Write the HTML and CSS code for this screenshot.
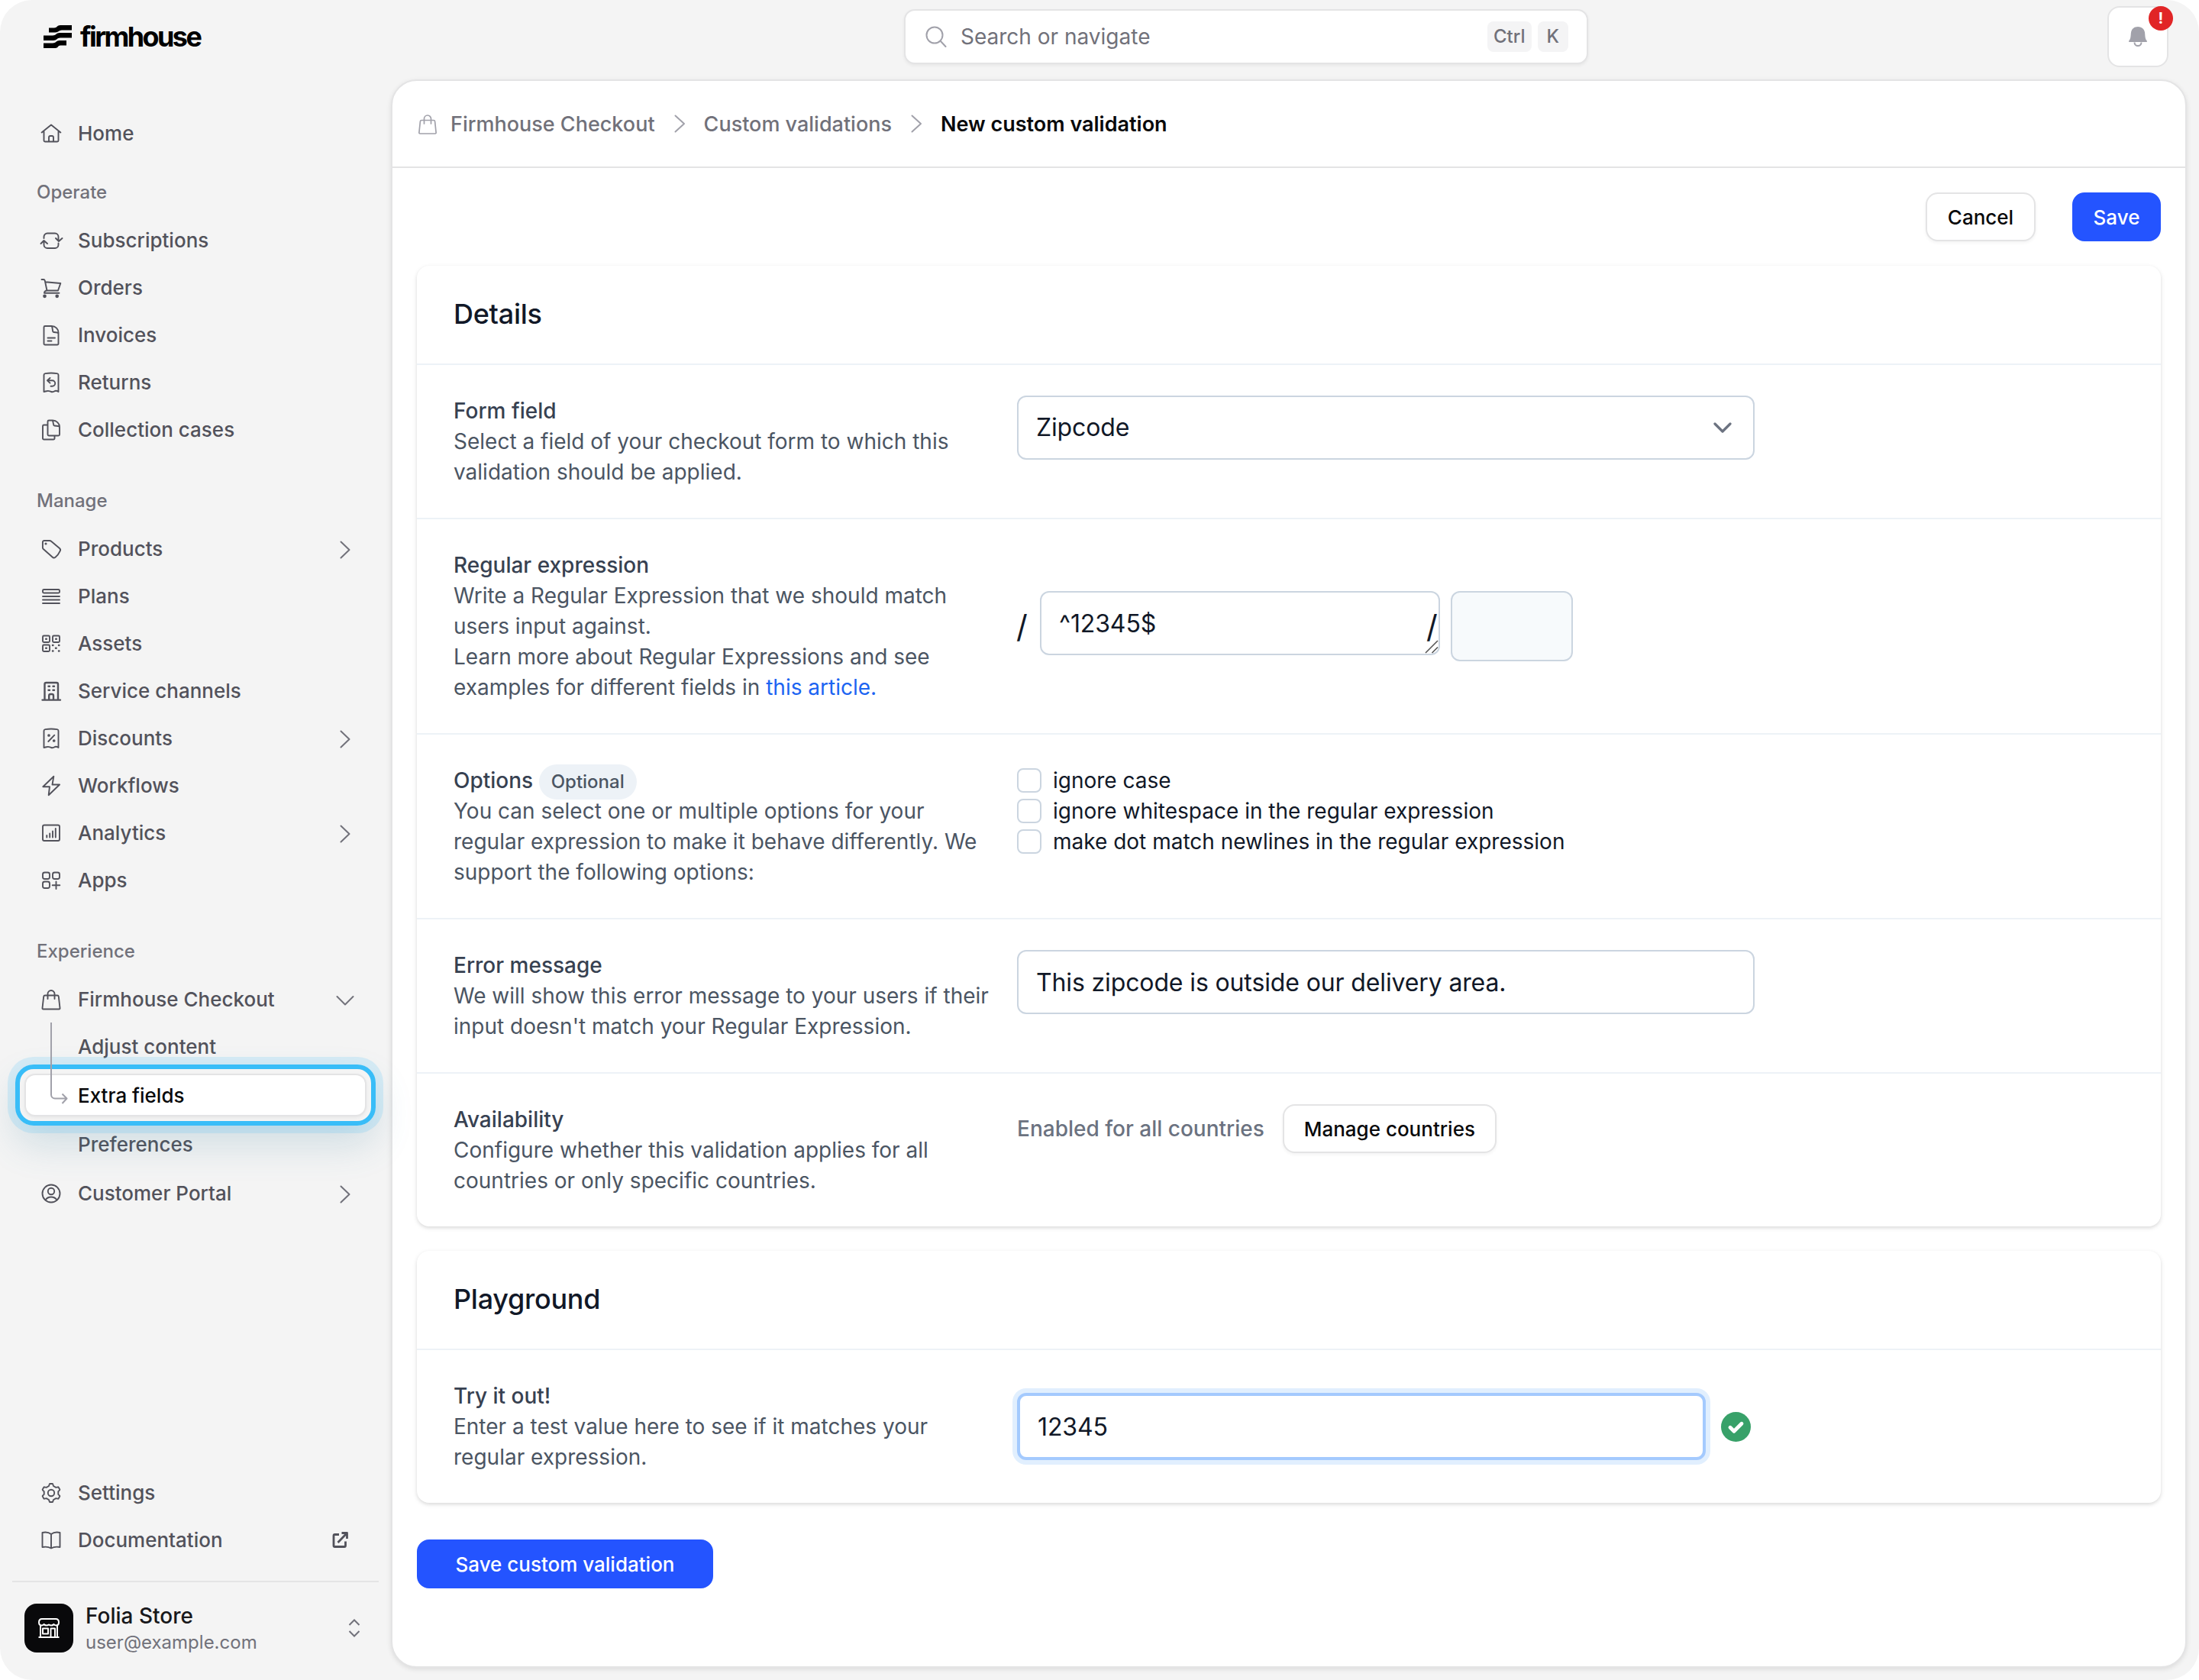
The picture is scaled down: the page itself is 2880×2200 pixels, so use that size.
FILE: index.html
```html
<!DOCTYPE html>
<html lang="en">
<head>
    <meta charset="UTF-8">
    <meta name="viewport" content="width=device-width, initial-scale=1.0">
    <title>New custom validation - Firmhouse</title>
    <link rel="stylesheet" href="styles.css">
</head>
<body>
    <div class="app">
        <header class="topbar">
            <a class="logo">
                <svg width="38" height="32" viewBox="0 0 38 32"><path d="M7 4.500h7c3.500 0 4-3.500 8-3.500h15v6.500H24c-4 0-4.500 3-8.500 3H7zM0 14.500h12c4 0 5-3.500 9-3.500h16v6.500H22c-4 0-5 3.500-9 3.500H0zM0 24.500h12c4 0 5-3.500 9-3.500h9v6.500H22c-3 0-3 3.500-6.500 3.500H0z"/></svg>
                <span>firmhouse</span>
            </a>
            <div class="search">
                <svg class="search-icon" width="28" height="28" viewBox="0 0 28 28"><circle cx="12" cy="12" r="10.500"/><path d="M19.500 19.500l7 7.500"/></svg>
                <span class="search-text">Search or navigate</span>
                <kbd>Ctrl</kbd>
                <kbd>K</kbd>
            </div>
            <button class="bell">
                <svg width="26" height="28" viewBox="0 0 26 28"><path d="M13 1C7.500 1 4 4.500 3.800 10 3.600 15 3 17.500 1.200 19.500c-.5.7-.2 1.500.8 1.500h22c1 0 1.300-.8.8-1.500-1.800-2-2.400-4.500-2.600-9.500C22 4.500 18.500 1 13 1z" fill="#a1a1aa"/><path d="M8.500 21.500a4.500 4.500 0 0 0 9 0" fill="none" stroke="#a1a1aa" stroke-width="2"/></svg>
                <span class="alert">!</span>
            </button>
        </header>

        <nav class="sidebar">
            <a class="item">
                <svg class="icon" viewBox="0 0 32 32"><path d="M3.600 15.500L16 5.500l12.400 10M6.500 14v12A1.500 1.500 0 0 0 8 27.500h16a1.500 1.500 0 0 0 1.500-1.500V14M13 27.500v-5.500a2 2 0 0 1 2-2h2a2 2 0 0 1 2 2v5.500"/></svg>
                <span>Home</span>
            </a>

            <div class="group first">
                <h3>Operate</h3>
                <a class="item">
                    <svg class="icon" viewBox="0 0 32 32"><path d="M6.500 14v-2a4.500 4.500 0 0 1 4.500-4.500h10a4.500 4.500 0 0 1 4.500 4.500v5.500M25.500 20.500v2A4.500 4.500 0 0 1 21 27H11a4.500 4.500 0 0 1-4.500-4.500v-5M22 14l4 4 4.500-4M2.500 21l4-4 4.500 4"/></svg>
                    <span>Subscriptions</span>
                </a>
                <a class="item">
                    <svg class="icon" viewBox="0 0 32 32"><path d="M3.500 6H6c1 0 1.500.5 1.800 1.500L10.500 20.500h14.500L28.300 11 8.500 9.200M10.500 20.500c-2 0-3.500 1.500-3.500 3.300h19.500"/><circle cx="7.500" cy="27.800" r="1.400" class="dot"/><circle cx="23.700" cy="27.800" r="1.400" class="dot"/></svg>
                    <span>Orders</span>
                </a>
                <a class="item">
                    <svg class="icon" viewBox="0 0 32 32"><path d="M8 5h8.500c5.500 0 9 4 9 8.500V28a1.500 1.500 0 0 1-1.500 1.500H8A1.500 1.500 0 0 1 6.500 28V6.500A1.500 1.500 0 0 1 8 5zM16.500 5c1.500 1 1 6 2 7.500 1.500 1.500 6 0 7 2M11.500 20.500h9.500M11.500 24.500h5"/></svg>
                    <span>Invoices</span>
                </a>
                <a class="item">
                    <svg class="icon" viewBox="0 0 32 32"><path d="M6.500 29V7c0-1 .7-1.700 1.700-1.900q7.800-1.200 15.600 0c1 .2 1.700.9 1.700 1.900v22c-1.500-1-3-1.500-4.500-1-1.500 1-3 1.500-5 1s-3-1.500-5-1c-1.500.2-3 .5-4.500 1zM14.500 11l-3.500 3.300 3.500 3.300M11.500 14.300h6a3.700 3.700 0 0 1 0 7.400H15.500"/></svg>
                    <span>Returns</span>
                </a>
                <a class="item">
                    <svg class="icon" viewBox="0 0 32 32"><path d="M13 4.500h5c5 0 9 4 9 8.500v10a1.500 1.500 0 0 1-1.500 1.500H13a1.500 1.500 0 0 1-1.500-1.500V6A1.500 1.500 0 0 1 13 4.500zM17.500 4.500c1.500 1 1 5 2 6.500 1.500 1.500 6 0 7.500 2M11.500 10.500h-5A1.500 1.500 0 0 0 5 12v16a1.500 1.500 0 0 0 1.500 1.500H19a1.500 1.500 0 0 0 1.500-1.500v-3.500"/></svg>
                    <span>Collection cases</span>
                </a>
            </div>

            <div class="group">
                <h3>Manage</h3>
                <a class="item">
                    <svg class="icon" viewBox="0 0 32 32"><path d="M7 6h7c.8 0 1.400.3 2 .8l11 9.200c1.300 1.200 1.500 2.500.5 3.800-1.400 3-3 5.700-6 8-1.300.9-2.700.9-3.900-.3L5.800 17c-.6-.6-.9-1.100-.9-2V8A2 2 0 0 1 7 6z"/><circle cx="9" cy="10" r=".6" class="dot"/></svg>
                    <span>Products</span>
                    <svg class="chev" viewBox="0 0 24 24"><path d="M6.500 1.500L17.500 12 6.500 22.500"/></svg>
                </a>
                <a class="item">
                    <svg class="icon" viewBox="0 0 32 32"><rect x="5" y="8" width="22" height="4.500" rx="1.500"/><path d="M5 17h22M5 21.500h22M5 26h22"/></svg>
                    <span>Plans</span>
                </a>
                <a class="item">
                    <svg class="icon" viewBox="0 0 32 32"><rect x="5" y="6.500" width="9" height="8.500" rx="1.500"/><rect x="18" y="6.500" width="9" height="8.500" rx="1.500"/><rect x="5" y="18.500" width="9" height="8.500" rx="1.500"/><path d="M9.200 10.750h.6M22.200 10.750h.6M9.200 22.750h.6M18 19h.4M26 19h.4M22 22.800h.6M18 26.500h.4M26 26.500h.4" stroke-width="2.500"/></svg>
                    <span>Assets</span>
                </a>
                <a class="item">
                    <svg class="icon" viewBox="0 0 32 32"><path d="M7.500 28V8a2 2 0 0 1 2-2h13.500a2 2 0 0 1 2 2v20M4.500 28.600h23.500M13.200 28v-5a2 2 0 0 1 2-2h1.800a2 2 0 0 1 2 2v5M12.500 10.800h1.500M18.500 10.800h1.500M12.500 15.800h1.500M18.500 15.800h1.500" stroke-width="2.400"/></svg>
                    <span>Service channels</span>
                </a>
                <a class="item">
                    <svg class="icon" viewBox="0 0 32 32"><path d="M6.500 29V7c0-1 .7-1.700 1.700-1.900q7.800-1.200 15.600 0c1 .2 1.700.9 1.700 1.900v22c-1.500-1-3-1.500-4.500-1-1.500 1-3 1.500-5 1s-3-1.500-5-1c-1.500.2-3 .5-4.500 1zM20.300 12.700l-8 8.300"/><circle cx="13" cy="13" r=".9" class="dot"/><circle cx="19.700" cy="20" r=".9" class="dot"/></svg>
                    <span>Discounts</span>
                    <svg class="chev" viewBox="0 0 24 24"><path d="M6.500 1.500L17.500 12 6.500 22.500"/></svg>
                </a>
                <a class="item">
                    <svg class="icon" viewBox="0 0 32 32"><path d="M19.300 4.800L5.300 18.200h8.700L12.700 29.200 27 15.500H17.500z"/></svg>
                    <span>Workflows</span>
                </a>
                <a class="item">
                    <svg class="icon" viewBox="0 0 32 32"><rect x="5" y="6.500" width="22" height="20.500" rx="2"/><path d="M10.300 22.500v-2.500M14.200 22.500v-5M18 22.500v-8M21.800 22.500v-11.500"/></svg>
                    <span>Analytics</span>
                    <svg class="chev" viewBox="0 0 24 24"><path d="M6.500 1.500L17.500 12 6.500 22.500"/></svg>
                </a>
                <a class="item">
                    <svg class="icon" viewBox="0 0 32 32"><rect x="5" y="6.500" width="9" height="8.500" rx="2.500"/><rect x="18" y="6.500" width="9" height="8.500" rx="2.500"/><rect x="5" y="18.500" width="9" height="8.500" rx="2.500"/><path d="M22.500 18.500v9.500M17.700 23.200h9.600"/></svg>
                    <span>Apps</span>
                </a>
            </div>

            <div class="group">
                <h3>Experience</h3>
                <a class="item">
                    <svg class="icon" viewBox="0 0 32 32"><path d="M8 11.500h16c1 0 1.700.5 1.800 1.500l1.700 15c.1.900-.3 1.500-1.200 1.500H5.700c-.9 0-1.300-.6-1.200-1.500L6.200 13c.1-1 .8-1.500 1.800-1.500zM11.500 16V9.500a4.500 4.500 0 0 1 9 0V16"/></svg>
                    <span>Firmhouse Checkout</span>
                    <svg class="chev" viewBox="0 0 24 24"><path d="M1.500 7L12 17.500 22.500 7"/></svg>
                </a>
                <a class="item sub">
                    <span>Adjust content</span>
                </a>
                <a class="item sub active">
                    <span>Extra fields</span>
                    <i class="highlight"></i>
                    <svg class="tree" width="26" height="112" viewBox="0 0 26 112"><path d="M3 1v94.500a5 5 0 0 0 5 5h15M17.500 94.500l6 6-6 6.500"/></svg>
                </a>
                <a class="item sub">
                    <span>Preferences</span>
                </a>
                <a class="item portal">
                    <svg class="icon" viewBox="0 0 32 32"><circle cx="16" cy="17" r="11.500"/><circle cx="16" cy="14" r="4.200"/><path d="M8.500 25.500c1.500-2.500 4-4 7.500-4s6 1.500 7.500 4"/></svg>
                    <span>Customer Portal</span>
                    <svg class="chev" viewBox="0 0 24 24"><path d="M6.500 1.500L17.500 12 6.500 22.500"/></svg>
                </a>
            </div>

            <div class="bottom">
                <a class="item">
                    <svg class="icon" viewBox="0 0 32 32"><path d="M13 8l.8-2.500c.1-.4.400-.5.700-.5h3c.3 0 .6.100.7.500L19 8l3.300 1.900 2.500-.6c.4-.1.700.1.900.4l1.500 2.700c.2.300.2.600-.1.900l-1.800 1.800v3.800l1.800 1.800c.3.300.3.600.1.900l-1.500 2.700c-.2.300-.5.500-.9.400l-2.500-.6L19 26l-.8 2.500c-.1.400-.4.500-.7.500h-3c-.3 0-.6-.1-.7-.5L13 26l-3.300-1.900-2.500.6c-.4.100-.7-.1-.9-.4l-1.500-2.700c-.2-.3-.2-.6.100-.9l1.800-1.800v-3.800l-1.800-1.800c-.3-.3-.3-.6-.1-.9l1.500-2.700c.2-.3.500-.5.900-.4l2.500.6z"/><circle cx="16" cy="17" r="4.200"/></svg>
                    <span>Settings</span>
                </a>
                <a class="item">
                    <svg class="icon" viewBox="0 0 32 32"><path d="M16 9c-3-2.300-7-3-11.500-2v19c4.500-.8 8.500-.3 11.500 1.500 3-1.800 7-2.300 11.500-1.500V7C23 6 19 6.700 16 9zM16 9v18"/></svg>
                    <span>Documentation</span>
                    <svg class="external" viewBox="0 0 24 24"><path d="M10 5.500H4.500A1.500 1.500 0 0 0 3 7v13a1.500 1.500 0 0 0 1.500 1.500H17a1.500 1.500 0 0 0 1.500-1.500v-5.500M8.500 16L20 4M13.500 3.500h7V11"/></svg>
                </a>
            </div>

            <div class="account">
                <div class="avatar">
                    <svg width="28" height="26" viewBox="0 0 28 26"><path d="M5 1h18c2.500 0 4 2 4 4.500 0 2.300-1.500 4-3.500 4-1.500 0-2.300-.5-3-1.500-1 1.200-2 1.500-3.300 1.500S14.700 9 14 8.500c-.7.500-2 1-3.200 1S8.500 9.200 7.500 8c-.7 1-1.500 1.500-3 1.500C2.500 9.500 1 7.800 1 5.500 1 3 2.500 1 5 1zM3 9.500V25M25 9.500V25M.5 25h27M6 13.500h7v7H6zM16.500 25V13.500h5.500V25"/></svg>
                </div>
                <div class="who">
                    <strong>Folia Store</strong>
                    <span>user@example.com</span>
                </div>
                <svg class="updown" width="16" height="24" viewBox="0 0 16 24"><path d="M1.500 8L8 1.500 14.500 8M1.500 16L8 22.500 14.500 16"/></svg>
            </div>
        </nav>

        <main class="panel">
            <div class="breadcrumb">
                <svg class="icon" viewBox="0 0 32 32"><path d="M8 11.500h16c1 0 1.500.5 1.600 1.500l1.500 14.500c.1.900-.3 1.500-1.200 1.500H6.100c-.9 0-1.300-.6-1.200-1.500L6.400 13c.1-1 .6-1.500 1.600-1.500zM11.500 16V9.500a4.500 4.500 0 0 1 9 0V16"/></svg>
                <a>Firmhouse Checkout</a>
                <svg class="sep" viewBox="0 0 32 32"><path d="M10.500 5.500L22 16 10.500 26.500"/></svg>
                <a>Custom validations</a>
                <svg class="sep" viewBox="0 0 32 32"><path d="M10.500 5.500L22 16 10.500 26.500"/></svg>
                <b>New custom validation</b>
            </div>

            <div class="content">
                <div class="actions">
                    <button class="btn cancel">Cancel</button>
                    <button class="btn primary save">Save</button>
                </div>

                <section class="card">
                    <h2>Details</h2>
                    <div class="row">
                        <div class="label">
                            <h4>Form field</h4>
                            <p>Select a field of your checkout form to which this validation should be applied.</p>
                        </div>
                        <div class="field">
                            <div class="input select">
                                <span>Zipcode</span>
                                <svg width="24" height="16" viewBox="0 0 24 16"><path d="M2 2l10 10L22 2"/></svg>
                            </div>
                        </div>
                    </div>
                    <div class="row">
                        <div class="label">
                            <h4>Regular expression</h4>
                            <p>Write a Regular Expression that we should match users input against.<br>Learn more about Regular Expressions and see examples for different fields in <a>this article.</a></p>
                        </div>
                        <div class="field regex">
                            <span class="slash">/</span>
                            <div class="pattern">
                                <div class="input">^12345$</div>
                                <span class="slash end">/</span>
                                <svg class="grip" width="18" height="18" viewBox="0 0 18 18"><path d="M1 17L17 1M9.500 17L17 9.500"/></svg>
                            </div>
                            <div class="flags"></div>
                        </div>
                    </div>
                    <div class="row">
                        <div class="label">
                            <h4>Options <span class="badge">Optional</span></h4>
                            <p>You can select one or multiple options for your regular expression to make it behave differently. We support the following options:</p>
                        </div>
                        <div class="field">
                            <label><input type="checkbox">ignore case</label>
                            <label><input type="checkbox">ignore whitespace in the regular expression</label>
                            <label><input type="checkbox">make dot match newlines in the regular expression</label>
                        </div>
                    </div>
                    <div class="row">
                        <div class="label">
                            <h4>Error message</h4>
                            <p>We will show this error message to your users if their input doesn't match your Regular Expression.</p>
                        </div>
                        <div class="field">
                            <div class="input">This zipcode is outside our delivery area.</div>
                        </div>
                    </div>
                    <div class="row">
                        <div class="label">
                            <h4>Availability</h4>
                            <p>Configure whether this validation applies for all countries or only specific countries.</p>
                        </div>
                        <div class="field countries">
                            <span>Enabled for all countries</span>
                            <button class="btn manage">Manage countries</button>
                        </div>
                    </div>
                </section>

                <section class="card">
                    <h2>Playground</h2>
                    <div class="row">
                        <div class="label">
                            <h4>Try it out!</h4>
                            <p>Enter a test value here to see if it matches your regular expression.</p>
                        </div>
                        <div class="field try">
                            <div class="input focus">12345</div>
                            <svg width="39" height="39" viewBox="0 0 39 39"><circle cx="19.500" cy="19.500" r="19.500" fill="#38a169"/><path d="M12 20.300l5 5L27 15.300" fill="none" stroke="#fff" stroke-width="4.800" stroke-linecap="round" stroke-linejoin="round"/></svg>
                        </div>
                    </div>
                </section>

                <button class="btn primary submit">Save custom validation</button>
            </div>
        </main>
    </div>
</body>
</html>
```
FILE: styles.css
```css
*{
    margin: 0;
    padding: 0;
    box-sizing: border-box;
}
body{
    background: #fff;
    font-family: Inter, "Liberation Sans", sans-serif;
    font-size: 28px;
    line-height: 40px;
    color: #111827;
}
button{
    font: inherit;
}
svg{
    display: block;
    flex: none;
}
.app{
    width: 2880px;
    height: 2200px;
    background: #f4f4f4;
    border-radius: 42px;
    overflow: hidden;
    display: grid;
    grid-template-columns: 512px 2352px;
    grid-template-rows: 104px 2080px;
}

/* top bar */
.topbar{
    grid-column: 1 / 3;
    width: 2880px;
    display: flex;
    align-items: flex-start;
    padding: 8px 40px 0 57px;
}
.logo{
    width: 1127px;
    display: flex;
    gap: 10px;
    align-items: center;
    padding-top: 20px;
    font-size: 36px;
    font-weight: 700;
    letter-spacing: -2.6px;
    color: #000;
}
.search{
    width: 896px;
    height: 72px;
    margin-top: 4px;
    padding: 0 24px 0 26px;
    display: flex;
    align-items: center;
    background: #fff;
    border: 2px solid #e4e4e5;
    border-radius: 14px;
    box-shadow: 0 2px 4px rgba(0, 0, 0, 0.06);
    color: #71717a;
}
.search-icon{
    fill: none;
    stroke: #a1a1aa;
    stroke-width: 2;
    stroke-linecap: round;
}
.search-text{
    flex: 1;
    padding-left: 18px;
}
.search kbd{
    height: 40px;
    padding: 0 8px;
    margin-left: 8px;
    border-radius: 8px;
    background: #f4f4f5;
    font-family: inherit;
    font-size: 24px;
    font-weight: 500;
}
.search kbd:last-child{
    padding: 0 12px;
}
.bell{
    position: relative;
    width: 80px;
    height: 80px;
    margin-left: auto;
    display: flex;
    align-items: center;
    justify-content: center;
    background: #fff;
    border: 2px solid #e4e4e5;
    border-radius: 16px;
}
.alert{
    position: absolute;
    top: -2px;
    right: -8px;
    width: 32px;
    height: 32px;
    border-radius: 50%;
    background: #e12526;
    color: #fff;
    font-size: 20px;
    font-weight: 700;
    line-height: 33px;
}

/* sidebar */
.sidebar{
    position: relative;
    z-index: 1;
    display: flex;
    flex-direction: column;
    padding-top: 39px;
    font-weight: 500;
    color: #52525b;
}
.group{
    margin-top: 32px;
}
.group.first{
    margin-top: 16px;
}
.group h3{
    height: 62px;
    padding-left: 48px;
    font-size: 24px;
    font-weight: 500;
    line-height: 62px;
    color: #71717a;
}
.item{
    height: 62px;
    margin: 0 34px;
    padding: 0 14px 0 17px;
    display: flex;
    align-items: center;
    font-size: 26px;
}
.item span{
    flex: 1;
    padding: 1px 0 0 19px;
}
.icon{
    width: 32px;
    height: 32px;
    fill: none;
    stroke: currentColor;
    stroke-width: 1.9;
    stroke-linecap: round;
    stroke-linejoin: round;
}
.icon .dot{
    fill: currentColor;
}
.chev{
    width: 24px;
    height: 24px;
    margin-top: 4px;
    fill: none;
    stroke: #71717a;
    stroke-width: 2;
    stroke-linecap: round;
    stroke-linejoin: round;
}
.external{
    width: 24px;
    height: 24px;
    margin-right: 6px;
    fill: none;
    stroke: currentColor;
    stroke-width: 2.8;
    stroke-linejoin: round;
}
.sub{
    padding-left: 49px;
}
.sub.active{
    position: relative;
    height: 52px;
    margin-top: 7px;
    margin-bottom: 7px;
    background: #fff;
    border-radius: 12px;
    box-shadow: 0 0 0 2px #e4e4e5, 0 2px 6px rgba(0, 0, 0, 0.1);
    color: #09090b;
}
.highlight{
    position: absolute;
    inset: -14px;
    border: 6px solid #38bdf8;
    border-radius: 24px;
    box-shadow: 0 0 0 10px rgba(56, 189, 248, 0.16), 0 24px 50px rgba(60, 128, 160, 0.2);
}
.tree{
    position: absolute;
    left: 30px;
    top: -70px;
    fill: none;
    stroke: #a1a1aa;
    stroke-width: 2;
    stroke-linejoin: round;
}
.portal{
    margin-top: 2px;
}
.bottom{
    margin-top: auto;
    padding-bottom: 23px;
}
.account{
    height: 114px;
    margin: 0 16px;
    padding: 28px 24px 0 16px;
    border-top: 2px solid #e4e4e5;
    display: flex;
}
.avatar{
    width: 64px;
    height: 64px;
    padding: 19px 18px;
    border-radius: 16px;
    background: #09090b;
}
.avatar svg{
    fill: none;
    stroke: #fff;
    stroke-width: 2;
    stroke-linejoin: round;
}
.who{
    flex: 1;
    padding-left: 16px;
    margin-top: -4px;
}
.who strong{
    display: block;
    font-weight: 500;
    color: #18181b;
}
.who span{
    display: block;
    font-size: 24px;
    font-weight: 400;
    line-height: 29px;
    color: #71717a;
}
.updown{
    margin-top: 20px;
    fill: none;
    stroke: #71717a;
    stroke-width: 2;
}

/* main panel */
.panel{
    background: #fff;
    border: 2px solid #e4e4e5;
    border-radius: 34px;
    box-shadow: 0 2px 6px rgba(0, 0, 0, 0.1);
}
.breadcrumb{
    height: 114px;
    padding-left: 30px;
    border-bottom: 2px solid #e4e4e5;
    display: flex;
    align-items: center;
    gap: 16px;
    font-size: 27px;
    font-weight: 500;
    color: #71717a;
}
.breadcrumb .icon{
    margin-right: -2px;
    stroke: #a1a1aa;
    stroke-width: 1.7;
}
.breadcrumb a,
.breadcrumb b{
    padding-top: 1px;
}
.breadcrumb b{
    font-weight: 600;
    color: #09090b;
}
.sep{
    width: 32px;
    height: 32px;
    fill: none;
    stroke: #a1a1aa;
    stroke-width: 2;
    stroke-linecap: round;
    stroke-linejoin: round;
}
.content{
    padding: 32px;
}
.actions{
    display: flex;
    justify-content: flex-end;
    gap: 48px;
    margin-bottom: 32px;
}
.btn{
    height: 64px;
    padding-top: 1px;
    border: 2px solid #e4e4e5;
    border-radius: 16px;
    background: #fff;
    box-shadow: 0 2px 4px rgba(0, 0, 0, 0.05);
    font-size: 26px;
    font-weight: 500;
    color: #09090b;
}
.btn.primary{
    background: #2454ff;
    border-color: #2454ff;
    box-shadow: none;
    color: #fff;
}
.cancel{
    width: 144px;
}
.save{
    width: 116px;
}
.manage{
    width: 280px;
}
.submit{
    width: 388px;
    margin-top: 16px;
}
.card{
    margin-bottom: 32px;
    border-radius: 16px;
    background: #fff;
    box-shadow: 0 2px 6px rgba(0, 0, 0, 0.1), 0 2px 4px rgba(0, 0, 0, 0.06);
}
.card h2{
    height: 128px;
    padding-left: 48px;
    font-size: 36px;
    font-weight: 500;
    line-height: 126px;
    letter-spacing: -0.27px;
}
.row{
    padding: 40px 48px;
    border-top: 2px solid #edf2f7;
    display: grid;
    grid-template-columns: 706px 966px;
    gap: 32px;
}
.label h4{
    height: 40px;
    font-weight: 500;
    color: #374151;
}
.label p{
    color: #4b5563;
}
.label p a{
    color: #1c64f2;
}
.badge{
    display: inline-block;
    height: 46px;
    margin: -4px 0;
    padding: 0 16px;
    border-radius: 23px;
    background: #edf2f7;
    font-size: 24px;
    line-height: 46px;
    color: #4b5563;
}
.input{
    height: 84px;
    padding: 0 23px;
    border: 2px solid #cbd5e0;
    border-radius: 12px;
    background: #fff;
    font-size: 32px;
    line-height: 82px;
    letter-spacing: -0.13px;
}
.select{
    display: flex;
    align-items: center;
    justify-content: space-between;
    padding-right: 28px;
}
.select svg{
    margin-top: 2px;
    fill: none;
    stroke: #6b7280;
    stroke-width: 3.2;
    stroke-linecap: round;
    stroke-linejoin: round;
}
.regex{
    display: flex;
    align-self: center;
    align-items: flex-start;
}
.slash{
    width: 31px;
    margin-left: -1px;
    font-size: 41px;
    line-height: 92px;
}
.pattern{
    position: relative;
    width: 524px;
    margin-right: 14px;
}
/* closing slash sits on top of the textarea */
.slash.end{
    position: absolute;
    top: 0;
    right: -13px;
}
.grip{
    position: absolute;
    right: 2px;
    bottom: 2px;
    fill: none;
    stroke: #555;
    stroke-width: 1.6;
}
.flags{
    width: 160px;
    height: 92px;
    border: 2px solid #cbd5e0;
    border-radius: 12px;
    background: #f7fafc;
}
.field label{
    height: 40px;
    display: flex;
    align-items: center;
}
.field input{
    appearance: none;
    width: 32px;
    height: 32px;
    margin-right: 15px;
    border: 2px solid #cbd5e0;
    border-radius: 8px;
    background: #fff;
}
.countries{
    display: flex;
    align-items: center;
    height: 64px;
    gap: 24px;
    color: #6b7280;
    font-weight: 500;
}
.try{
    display: flex;
    align-items: center;
    align-self: center;
    gap: 20px;
}
.input.focus{
    width: 902px;
    height: 88px;
    border: 4px solid #a4cafe;
    box-shadow: 0 0 0 6px #e1effe;
}
```
